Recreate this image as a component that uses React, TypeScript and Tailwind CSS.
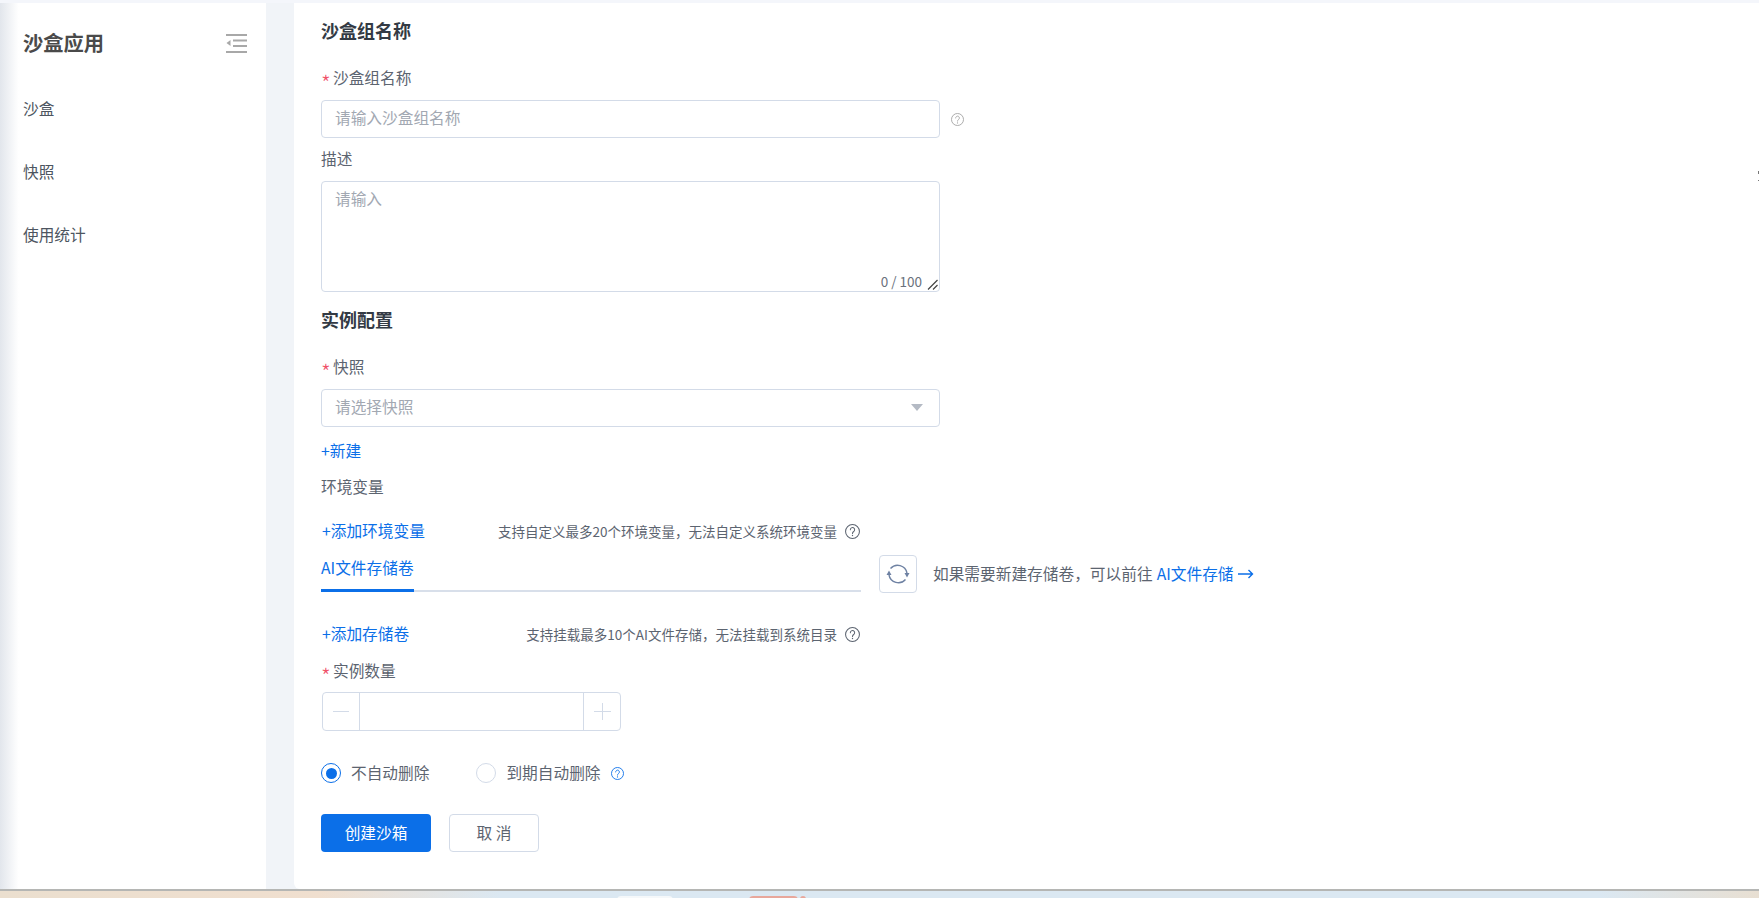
import React from 'react';

const font = { fontFamily: '"Noto Sans CJK SC", "Noto Sans", sans-serif' };

const Help = ({ size = 14, className = '' }: { size?: number; className?: string }) => (
    <svg width={size} height={size} viewBox="0 0 16 16" fill="none" stroke="currentColor" strokeWidth="1.1" className={className}>
        <circle cx="8" cy="8" r="7.4" />
        <path d="M5.7 6.1a2.3 2.3 0 1 1 3.6 1.9c-.9.6-1.3 1.1-1.3 2" strokeLinecap="round" />
        <circle cx="8" cy="12.2" r=".75" fill="currentColor" stroke="none" />
    </svg>
);

const Label = ({ required, children, className = '' }: { required?: boolean; children: React.ReactNode; className?: string }) => (
    <div className={`h-6 flex items-center text-[15.7px] leading-6 text-[#5c6470] ${className}`}>
        {required && <span className="w-[12px] pt-[8px] text-[#f0526a] text-[22px] leading-6 font-light">*</span>}
        {children}
    </div>
);

const Heading = ({ children, className = '' }: { children: React.ReactNode; className?: string }) => (
    <h2 className={`h-6 text-[18px] leading-6 font-bold text-[#333a44] ${className}`}>{children}</h2>
);

const App: React.FC = () => {
    return (
        <div style={font} className="w-[1759px] h-[898px] overflow-hidden bg-white flex flex-col relative">
            <div className="h-[889px] flex flex-row bg-[#f1f4f8]">
                {/* Sidebar */}
                <aside className="w-[266px] shrink-0 bg-gradient-to-r from-[#e2e6ec] via-white via-[7%] to-white pl-[23px] pr-[19px]">
                    <div className="h-6 mt-[30px] flex items-center justify-between">
                        <span className="text-[20.3px] font-bold text-[#4a4a4a]">沙盒应用</span>
                        <svg width="21" height="19" viewBox="0 0 21 19" className="text-[#a8a8a8] mt-[2px]" fill="currentColor">
                            <rect x="0" y="0" width="21" height="2" />
                            <rect x="7" y="5.5" width="14" height="2" />
                            <rect x="7" y="11" width="14" height="2" />
                            <rect x="0" y="17" width="21" height="2" />
                            <path d="M4.5 6v6L0.5 9z" />
                        </svg>
                    </div>
                    <nav className="mt-[43px] flex flex-col gap-[39px] text-[15.7px] leading-6 text-[#4d5560]">
                        <a>沙盒</a>
                        <a>快照</a>
                        <a>使用统计</a>
                    </nav>
                </aside>
                <div className="w-[28px] shrink-0" />

                {/* Form */}
                <main className="flex-1 pl-[27px] bg-white rounded-bl-md">
                    <Heading className="mt-[18px]">沙盒组名称</Heading>

                    <Label required className="mt-[24px]">沙盒组名称</Label>
                    <div className="mt-[10px] flex items-center">
                        <div className="w-[619px] h-[38px] border border-[#d3dbe8] rounded-[4px] pl-[13px] pb-[2px] flex items-center text-[15.7px] text-[#a2a8b2]">请输入沙盒组名称</div>
                        <Help size={13} className="ml-[11px] text-[#a3a3a3]" />
                    </div>

                    <Label className="mt-[9px]">描述</Label>
                    <div className="mt-[10px] relative w-[619px] h-[111px] border border-[#d3dbe8] rounded-[4px] pl-[13px] pt-[5px] text-[15.7px] leading-6 text-[#a2a8b2]">
                        请输入
                        <span className="absolute right-[17px] bottom-[-2px] text-[13.5px] leading-6 text-[#6a717c]">0 / 100</span>
                        <svg width="11" height="11" viewBox="0 0 11 11" className="absolute right-[1px] bottom-[1px] text-[#444]" stroke="currentColor" strokeWidth="1.2">
                            <path d="M1 10.5 10.5 1M6 10.5 10.5 6" />
                        </svg>
                    </div>

                    <Heading className="mt-[15px]">实例配置</Heading>

                    <Label required className="mt-[24px]">快照</Label>
                    <div className="mt-[10px] w-[619px] h-[38px] border border-[#d3dbe8] rounded-[4px] pl-[13px] pr-[16px] pb-[2px] flex items-center justify-between text-[15.7px] text-[#a2a8b2]">
                        请选择快照
                        <span className="w-0 h-0 border-x-[6px] border-x-transparent border-t-[7px] border-t-[#b4bac4]" />
                    </div>

                    <div className="mt-[12px] h-6 text-[15.7px] leading-6 text-[#0b6fe8]">+新建</div>
                    <Label className="mt-[12px]">环境变量</Label>

                    <div className="mt-[20px] w-[539px] h-6 flex items-center pl-px">
                        <span className="text-[15.7px] text-[#0b6fe8]">+添加环境变量</span>
                        <span className="ml-auto text-[13.5px] text-[#5c6470]">支持自定义最多20个环境变量，无法自定义系统环境变量</span>
                        <Help size={15} className="ml-[8px] text-[#5c6470]" />
                    </div>

                    <div className="mt-[12px] flex items-start">
                        <div className="w-[540px] h-[37px] border-b-2 border-[#d8dfea] flex">
                            <div className="w-[93px] h-[37px] border-b-[3px] border-[#0b6fe8] text-[15.7px] leading-[26px] text-[#0b6fe8]">AI文件存储卷</div>
                        </div>
                        <button className="ml-[18px] w-[38px] h-[38px] border border-[#d3dbe8] rounded-[4px] flex items-center justify-center">
                            <svg width="24" height="24" viewBox="0 0 24 24" fill="none" stroke="#6f82a3" strokeWidth="1.4">
                                <path d="M19.5 17.5A9.5 9.5 0 0 1 3 13" />
                                <path d="M4.5 6.5A9.5 9.5 0 0 1 21 11" />
                                <path d="M3 8.5 5.5 13h-5zM21 15.5 18.5 11h5z" fill="#6f82a3" stroke="none" />
                            </svg>
                        </button>
                        <div className="ml-[16px] h-[38px] flex items-center text-[15.7px] text-[#5c6470] whitespace-nowrap">
                            如果需要新建存储卷，可以前往
                            <span className="ml-[4px] text-[#0b6fe8]">AI文件存储</span>
                            <svg width="16" height="10" viewBox="0 0 16 10" fill="none" stroke="#0b6fe8" strokeWidth="1.4" className="ml-[4px]">
                                <path d="M0 5h14.5M10.5 1l4 4-4 4" />
                            </svg>
                        </div>
                    </div>

                    <div className="mt-[29px] w-[539px] h-6 flex items-center pl-px">
                        <span className="text-[15.7px] text-[#0b6fe8]">+添加存储卷</span>
                        <span className="ml-auto text-[13.5px] text-[#5c6470]">支持挂载最多10个AI文件存储，无法挂载到系统目录</span>
                        <Help size={15} className="ml-[8px] text-[#5c6470]" />
                    </div>

                    <Label required className="mt-[13px]">实例数量</Label>
                    <div className="mt-[9px] ml-px w-[299px] h-[39px] border border-[#d3dbe8] rounded-[4px] flex">
                        <div className="w-[37px] border-r border-[#d3dbe8] flex items-center justify-center">
                            <span className="w-[16px] h-px bg-[#d3dbe8]" />
                        </div>
                        <div className="flex-1" />
                        <div className="w-[37px] border-l border-[#d3dbe8] flex items-center justify-center">
                            <svg width="17" height="17" viewBox="0 0 17 17" stroke="#d3dbe8" strokeWidth="1"><path d="M0 8.5h17M8.5 0v17" /></svg>
                        </div>
                    </div>

                    <div className="mt-[30px] h-6 flex items-center text-[15.7px] text-[#5c6470]">
                        <span className="w-[20px] h-[20px] rounded-full border-[1.5px] border-[#0b6fe8] flex items-center justify-center">
                            <span className="w-[11px] h-[11px] rounded-full bg-[#0b6fe8]" />
                        </span>
                        <span className="ml-[10px]">不自动删除</span>
                        <span className="ml-[47px] w-[20px] h-[20px] rounded-full border border-[#d3dbe8]" />
                        <span className="ml-[10px]">到期自动删除</span>
                        <Help size={13} className="ml-[10px] text-[#0b6fe8]" />
                    </div>

                    <div className="mt-[29px] flex gap-[18px]">
                        <button className="w-[110px] h-[38px] rounded-[4px] bg-[#0b6fe8] text-white text-[15.7px]">创建沙箱</button>
                        <button className="w-[90px] h-[38px] rounded-[4px] border border-[#d3dbe8] text-[#5c6470] text-[15.7px]">取 消</button>
                    </div>
                </main>
            </div>

            {/* Desktop strip below the window */}
            <div className="h-[2px] bg-[#b5b6b4]" />
            <div className="flex-1 relative overflow-hidden bg-[linear-gradient(to_right,#ebdfcf_0,#f0dfcf_320px,#dbe8f2_500px,#dbe8f2_1600px,#e8dfd2_1759px)]">
                <div className="absolute left-[617px] top-[5px] w-[56px] h-[4px] rounded-t bg-[#f5f8fa]" />
                <div className="absolute left-[749px] top-[5px] w-[49px] h-[4px] rounded-t bg-[#e8a79b]" />
                <div className="absolute left-[800px] top-[5px] w-[6px] h-[4px] rounded-t bg-[#e8a79b]" />
            </div>
            <div className="absolute top-0 left-0 right-0 h-[3px] bg-[#f4f6fb]" />
            <div className="absolute right-0 top-[171px] w-px h-[3px] bg-[#777]" />
            <div className="absolute right-0 top-[180px] w-px h-px bg-[#777]" />
        </div>
    );
};

export default App;
